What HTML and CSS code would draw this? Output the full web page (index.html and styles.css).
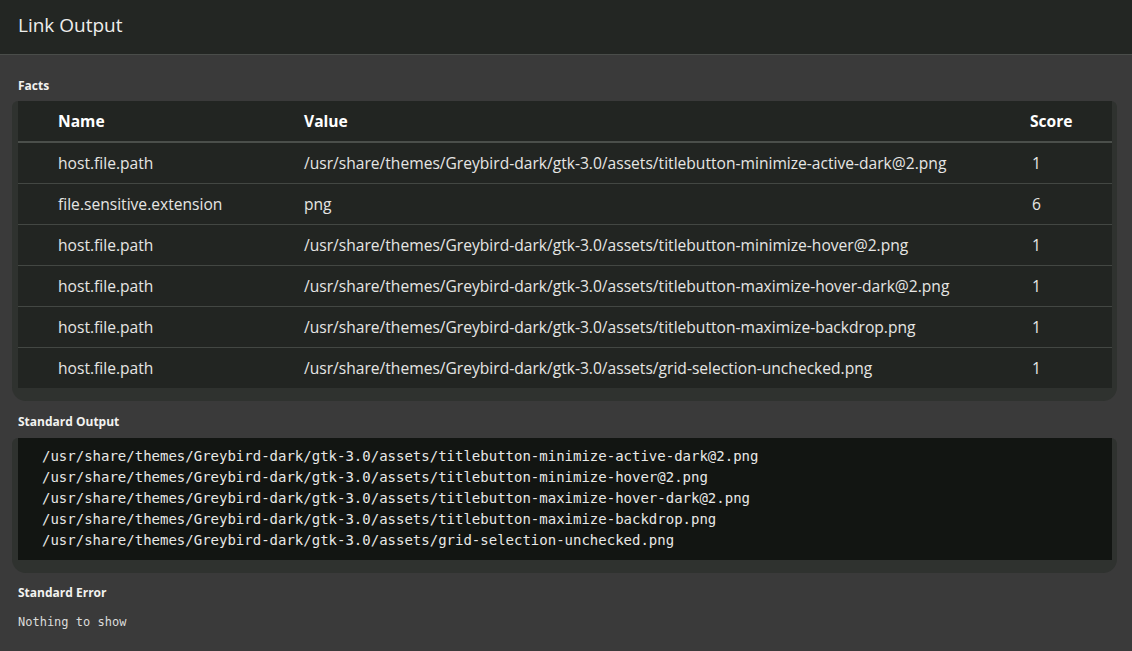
FILE: index.html
```html
<!DOCTYPE html>
<html>
<head>
<meta charset="utf-8">
<link rel="stylesheet" href="styles.css">
</head>
<body>
<header class="topbar"><h1 class="title">Link Output</h1></header>
<main class="content">
  <section class="section">
    <h2 class="label">Facts</h2>
    <div class="frame">
      <table class="facts">
        <colgroup><col class="w-name"><col class="w-value"><col class="w-score"></colgroup>
        <thead>
          <tr><th class="c-name">Name</th><th class="c-value">Value</th><th class="c-score">Score</th></tr>
        </thead>
        <tbody>
          <tr><td class="c-name">host.file.path</td><td class="c-value">/usr/share/themes/Greybird-dark/gtk-3.0/assets/titlebutton-minimize-active-dark@2.png</td><td class="c-score">1</td></tr>
          <tr><td class="c-name">file.sensitive.extension</td><td class="c-value">png</td><td class="c-score">6</td></tr>
          <tr><td class="c-name">host.file.path</td><td class="c-value">/usr/share/themes/Greybird-dark/gtk-3.0/assets/titlebutton-minimize-hover@2.png</td><td class="c-score">1</td></tr>
          <tr><td class="c-name">host.file.path</td><td class="c-value">/usr/share/themes/Greybird-dark/gtk-3.0/assets/titlebutton-maximize-hover-dark@2.png</td><td class="c-score">1</td></tr>
          <tr><td class="c-name">host.file.path</td><td class="c-value">/usr/share/themes/Greybird-dark/gtk-3.0/assets/titlebutton-maximize-backdrop.png</td><td class="c-score">1</td></tr>
          <tr><td class="c-name">host.file.path</td><td class="c-value">/usr/share/themes/Greybird-dark/gtk-3.0/assets/grid-selection-unchecked.png</td><td class="c-score">1</td></tr>
        </tbody>
      </table>
    </div>
  </section>
  <section class="section">
    <h2 class="label label-out">Standard Output</h2>
    <div class="frame frame-out">
<pre class="code">/usr/share/themes/Greybird-dark/gtk-3.0/assets/titlebutton-minimize-active-dark@2.png
/usr/share/themes/Greybird-dark/gtk-3.0/assets/titlebutton-minimize-hover@2.png
/usr/share/themes/Greybird-dark/gtk-3.0/assets/titlebutton-maximize-hover-dark@2.png
/usr/share/themes/Greybird-dark/gtk-3.0/assets/titlebutton-maximize-backdrop.png
/usr/share/themes/Greybird-dark/gtk-3.0/assets/grid-selection-unchecked.png</pre>
    </div>
  </section>
  <section class="section">
    <h2 class="label">Standard Error</h2>
    <p class="empty">Nothing to show</p>
  </section>
</main>
</body>
</html>
```
FILE: styles.css
```css
html, body {
  margin: 0;
  padding: 0;
  background: #3a3a3a;
  color: #eeeeec;
  font-family: "Open Sans", "Noto Sans", sans-serif;
}
.topbar {
  height: 55px;
  background: #232623;
  border-bottom: 1px solid #4a4d4a;
  display: flex;
  align-items: center;
  padding: 0 18px;
  box-sizing: border-box;
}
.title {
  margin: 0;
  font-size: 19px;
  font-weight: 400;
  color: #eeeeec;
  padding-bottom: 5px;
}
.content {
  padding: 22px 20px 0 18px;
}
.section {
  display: flex;
  flex-direction: column;
}
.label {
  margin: 1px 0 7px 0;
  font-size: 12px;
  font-weight: 700;
  line-height: 16px;
  color: #f2f2f0;
}
.label-out {
  margin-bottom: 8px;
}
.frame {
  margin: 0 -5px 12px -6px;
  padding: 0 5px 13px 6px;
  background: #2f322f;
  border-radius: 6px 6px 14px 14px;
}
.frame-out {
  margin-bottom: 11px;
}
.facts {
  width: 100%;
  table-layout: fixed;
  border-collapse: collapse;
  background: #222522;
  font-size: 15.6px;
}
.w-name { width: 286px; }
.w-value { width: 726px; }
.facts th {
  text-align: left;
  font-weight: 700;
  height: 40px;
  padding: 0;
  border-bottom: 2px solid #4b4f4b;
  color: #ffffff;
  white-space: nowrap;
}
.facts td {
  height: 40px;
  padding: 0;
  border-top: 1px solid #434743;
  color: #e6e6e4;
  white-space: nowrap;
}
.facts tbody tr:first-child td { border-top: none; }
.facts .c-name { padding-left: 40px; }
.facts td.c-score { padding-left: 2px; }
.code {
  margin: 0;
  background: #121512;
  padding: 8px 24px 9px;
  font-family: "DejaVu Sans Mono", monospace;
  font-size: 14px;
  line-height: 21px;
  color: #e8e8e6;
}
.empty {
  margin: 0;
  padding-top: 7px;
  font-family: "DejaVu Sans Mono", monospace;
  font-size: 12px;
  color: #dcdcda;
}
```
